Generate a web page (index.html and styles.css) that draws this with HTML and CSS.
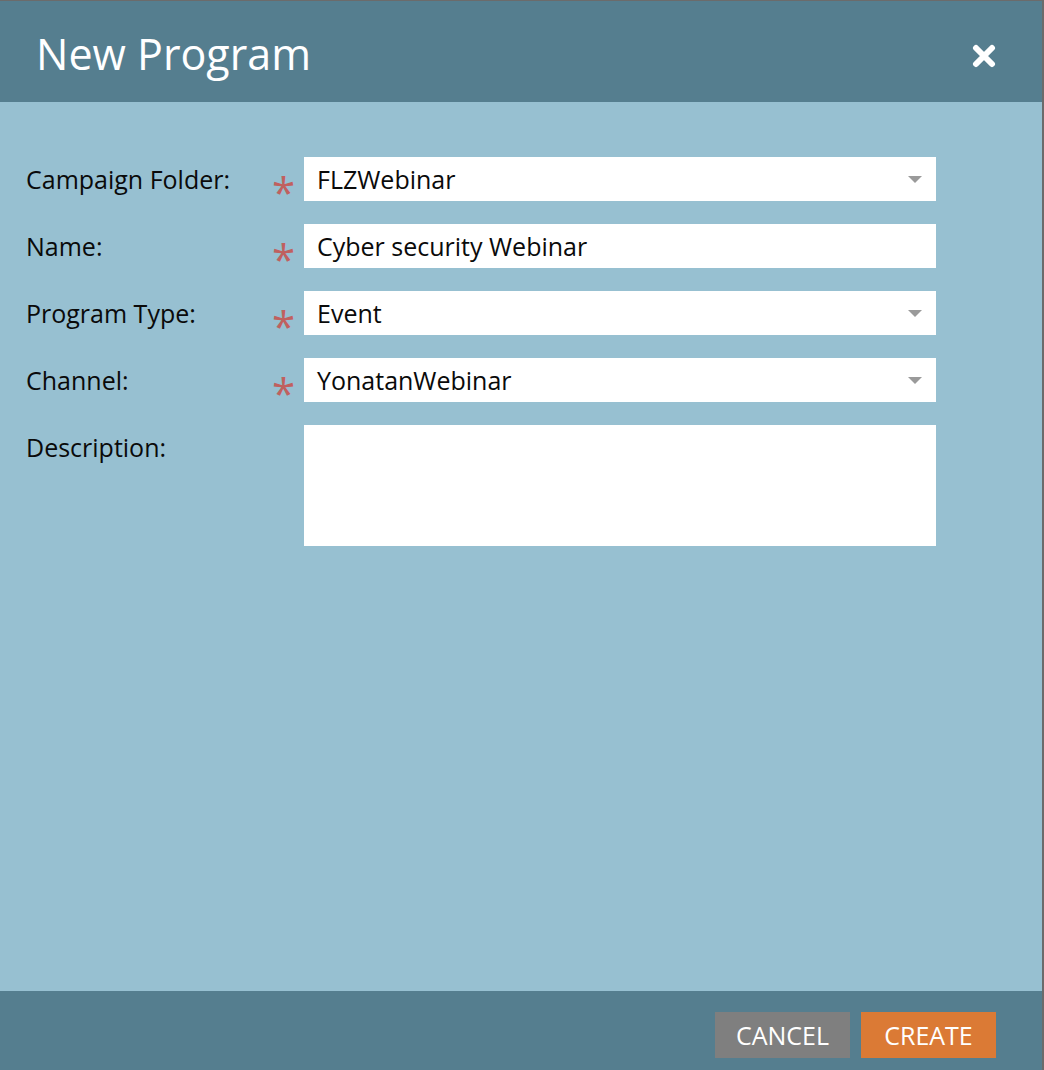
FILE: index.html
```html
<!DOCTYPE html>
<html lang="en">
<head>
    <meta charset="UTF-8">
    <meta name="viewport" content="width=device-width, initial-scale=1.0">
    <title>New Program</title>
    <link rel="stylesheet" href="styles.css">
</head>
<body>
    <div class="dialog">
        <div class="dialog-header">
            <h1>New Program</h1>
            <button class="close-btn" title="Close">
                <svg width="24" height="24" viewBox="0 0 24 24">
                    <path d="M4 4 L20 20 M20 4 L4 20" stroke="#fff" stroke-width="6" stroke-linecap="round"/>
                </svg>
            </button>
        </div>
        <form class="dialog-body">
            <label class="field-label">Campaign Folder:</label>
            <span class="required">*</span>
            <div class="field select">FLZWebinar<span class="caret"></span></div>

            <label class="field-label">Name:</label>
            <span class="required">*</span>
            <div class="field">Cyber security Webinar</div>

            <label class="field-label">Program Type:</label>
            <span class="required">*</span>
            <div class="field select">Event<span class="caret"></span></div>

            <label class="field-label">Channel:</label>
            <span class="required">*</span>
            <div class="field select">YonatanWebinar<span class="caret"></span></div>

            <label class="field-label top">Description:</label>
            <span></span>
            <div class="field textarea"></div>
        </form>
        <div class="dialog-footer">
            <button class="btn btn-cancel">CANCEL</button>
            <button class="btn btn-create">CREATE</button>
        </div>
    </div>
</body>
</html>
```

FILE: styles.css
```css
body {
    margin: 0;
    background-color: #6b6b6b;
    font-family: "Open Sans", Arial, sans-serif;
    color: #0a0a0a;
}
.dialog {
    display: flex;
    flex-direction: column;
    height: 1069px;
    margin-top: 1px;
    margin-right: 2px;
    background-color: #97c0d1;
}
.dialog-header {
    height: 101px;
    box-sizing: border-box;
    background-color: #557e8f;
    display: flex;
    align-items: center;
    justify-content: space-between;
    padding: 4px 46px 0 36px;
}
.dialog-header h1 {
    margin: 0;
    font-size: 43px;
    font-weight: 400;
    color: #fff;
}
.close-btn {
    background: none;
    border: none;
    padding: 0;
    width: 24px;
    height: 24px;
    margin-top: 5px;
    cursor: pointer;
}
.dialog-body {
    flex: 1;
    display: grid;
    grid-template-columns: 246px 32px 632px;
    grid-auto-rows: min-content;
    row-gap: 23px;
    padding: 55px 0 0 26px;
    align-items: center;
}
.field-label {
    font-size: 25px;
}
.field-label.top {
    align-self: start;
    padding-top: 5px;
}
.required {
    height: 44px;
    box-sizing: border-box;
    color: #c0605f;
    font-size: 42px;
    line-height: 1;
    padding-top: 14px;
}
.field {
    position: relative;
    height: 44px;
    background-color: #fff;
    font-size: 25px;
    line-height: 44px;
    padding-left: 13px;
}
.field.textarea {
    height: 121px;
}
.caret {
    position: absolute;
    right: 14px;
    top: 19px;
    width: 0;
    height: 0;
    border-left: 7px solid transparent;
    border-right: 7px solid transparent;
    border-top: 7px solid #9a9a9a;
}
.dialog-footer {
    height: 79px;
    background-color: #557e8f;
    display: flex;
    justify-content: flex-end;
    align-items: flex-start;
    gap: 11px;
    padding: 21px 46px 0 0;
    box-sizing: border-box;
}
.btn {
    width: 135px;
    height: 46px;
    border: none;
    color: #fff;
    font-family: "Open Sans", Arial, sans-serif;
    font-size: 25px;
    cursor: pointer;
}
.btn-cancel {
    background-color: #7f7f7f;
}
.btn-create {
    background-color: #db7a35;
}
```
